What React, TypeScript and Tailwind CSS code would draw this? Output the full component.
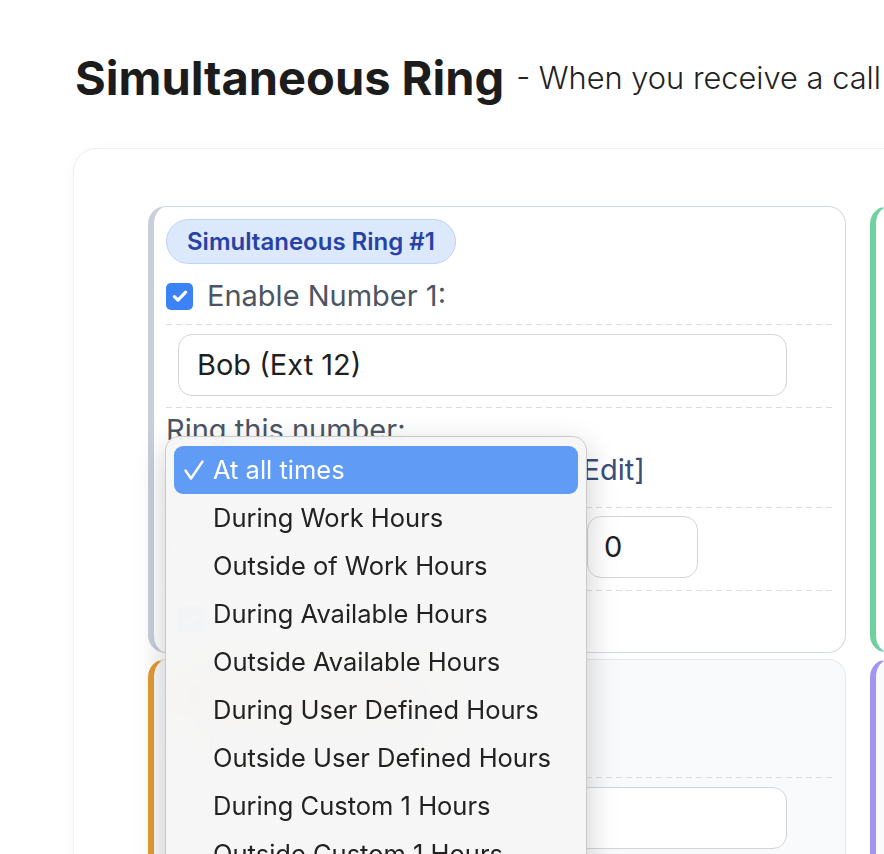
import { ReactNode } from 'react'

type Theme = { card: string; badge: string }

const themes: Record<string, Theme> = {
  slate: {
    card: 'border-[#d3d9e3] border-l-[#c8cfdb] bg-white',
    badge: 'border-[#bfd3f6] bg-[#dce8fc] text-[#2742a5]',
  },
  green: {
    card: 'border-[#d3d9e3] border-l-[#6fd0a0] bg-white',
    badge: 'border-[#b5e6cc] bg-[#dcf5e8] text-[#13734a]',
  },
  orange: {
    card: 'border-[#e6e8eb] border-l-[#e39b33] bg-[#f9fafb]',
    badge: 'border-[#f5d596] bg-[#fdedcb] text-[#9b5c0a]',
  },
  purple: {
    card: 'border-[#e6e8eb] border-l-[#a493f1] bg-[#f9fafb]',
    badge: 'border-[#d6cdfa] bg-[#ece8fe] text-[#5b3fc4]',
  },
}

const options = [
  'At all times',
  'During Work Hours',
  'Outside of Work Hours',
  'During Available Hours',
  'Outside Available Hours',
  'During User Defined Hours',
  'Outside User Defined Hours',
  'During Custom 1 Hours',
  'Outside Custom 1 Hours',
  'During Custom 2 Hours',
  'Outside Custom 2 Hours',
]

function Dashed() {
  return (
    <div className="h-px w-full bg-[linear-gradient(to_right,#d9dde3_6px,transparent_6px)] bg-[length:10px_1px] bg-repeat-x" />
  )
}

function Checkbox({ checked }: { checked: boolean }) {
  if (!checked) {
    return (
      <div className="h-[27px] w-[27px] shrink-0 rounded-[5px] border-[1.5px] border-[#b9bec6] bg-white" />
    )
  }
  return (
    <div className="flex h-[27px] w-[27px] shrink-0 items-center justify-center rounded-[5px] bg-[#3b82f6]">
      <svg width="18" height="18" viewBox="0 0 16 16" fill="none">
        <path
          d="M3 8.5l3.2 3.2L13 4.5"
          stroke="white"
          strokeWidth="2.8"
          strokeLinecap="round"
          strokeLinejoin="round"
        />
      </svg>
    </div>
  )
}

function RingCard({
  n,
  theme,
  enabled,
  who,
  children,
}: {
  n: number
  theme: Theme
  enabled: boolean
  who: string
  children?: ReactNode
}) {
  return (
    <div
      className={`relative rounded-[18px] border-[1.5px] border-l-[6px] pl-3 pr-[11px] pt-[12px] pb-[17px] ${theme.card}`}
    >
      <div
        className={`inline-flex h-[45px] items-center rounded-full border px-[20px] text-[24px] font-semibold ${theme.badge}`}
      >
        Simultaneous Ring #{n}
      </div>
      <div className="mt-[16px] flex h-[32px] items-center gap-[14px]">
        <Checkbox checked={enabled} />
        <span className="text-[29px] text-[#4b5563]">Enable Number {n}:</span>
      </div>
      <div className="mt-[12px]">
        <Dashed />
      </div>
      <div className="mt-[9px] pl-3">
        <div className="flex h-[62px] w-[609px] items-center rounded-[14px] border-[1.5px] border-[#d2d5da] bg-white px-[18px] text-[29px] text-[#1f1f1f]">
          {who}
        </div>
      </div>
      <div className="mt-[11px]">
        <Dashed />
      </div>
      <div className="mt-[6px] h-[32px] text-[29px] leading-[32px] text-[#4b5563]">
        Ring this number:
      </div>
      <div className="flex h-[48px] items-center pl-3">
        <div className="flex h-[48px] w-[384px] items-center rounded-[10px] border border-[#d2d5da] bg-white px-4 text-[24px] text-[#1f1f1f] shadow-[0_1px_2px_rgba(0,0,0,0.08)]">
          At all times
        </div>
        <span className="ml-[10px] text-[29px] text-[#3a4d7c]">[Edit]</span>
      </div>
      <div className="mt-[13px]">
        <Dashed />
      </div>
      <div className="mt-[8px] flex items-center">
        <span className="w-[421px] text-[24px] text-[#4b5563] opacity-40">Delay (seconds):</span>
        <div className="flex h-[62px] w-[111px] items-center rounded-[14px] border-[1.5px] border-[#d2d5da] bg-white px-[16px] text-[29px] text-[#1f1f1f]">
          0
        </div>
      </div>
      <div className="mt-[12px]">
        <Dashed />
      </div>
      <div className="mt-[12px] flex h-[32px] items-center gap-[14px] pl-3">
        <Checkbox checked={enabled} />
        <span className="text-[24px] text-[#4b5563] opacity-40">Confirm</span>
      </div>
      {children}
    </div>
  )
}

function OptionsMenu() {
  return (
    <div className="absolute left-[11px] top-[229px] z-20 h-[520px] w-[422px] rounded-[14px] border border-[#c9c9c9] bg-[#f6f6f6]/95 px-[8px] pt-[9px] shadow-[0_10px_32px_rgba(0,0,0,0.2)] backdrop-blur-2xl">
      {options.map((label, i) => {
        const selected = i === 0
        return (
          <div
            key={label}
            className={`flex h-[48px] items-center rounded-[9px] pl-[9px] text-[25.5px] ${
              selected ? 'bg-[#609bf6] text-white' : 'text-[#222222]'
            }`}
          >
            <span className="flex w-[30px] items-center">
              {selected ? (
                <svg width="22" height="22" viewBox="0 0 22 22" fill="none">
                  <path
                    d="M2.5 11.5L8 19.5L19.5 2.5"
                    stroke="white"
                    strokeWidth="2.4"
                    strokeLinecap="round"
                    strokeLinejoin="round"
                  />
                </svg>
              ) : null}
            </span>
            {label}
          </div>
        )
      })}
    </div>
  )
}

export default function App() {
  return (
    <div className="h-[854px] w-full overflow-hidden bg-white font-['Inter',sans-serif]">
      <div className="flex items-center whitespace-nowrap pl-[75px] pt-[55px]">
        <h1 className="text-[47px] font-bold leading-[46px] text-[#1c1c1c]">
          Simultaneous Ring
        </h1>
        <span className="ml-[12px] text-[30.8px] font-light leading-[36px] text-[#222222]">
          - When you receive a call
        </span>
      </div>

      <div className="ml-[73px] mt-[47px] w-[1700px] rounded-[24px] border border-[#efefef] bg-white pb-10 pl-[74px] pt-[57px] shadow-[0_2px_14px_rgba(0,0,0,0.04)]">
        <div className="grid grid-cols-[698px_698px] gap-x-6 gap-y-[6px]">
          <RingCard n={1} theme={themes.slate} enabled who="Bob (Ext 12)">
            <OptionsMenu />
          </RingCard>
          <RingCard n={2} theme={themes.green} enabled who="Alice (Ext 14)" />
          <RingCard n={3} theme={themes.orange} enabled={false} who="" />
          <RingCard n={4} theme={themes.purple} enabled={false} who="" />
        </div>
      </div>
    </div>
  )
}
